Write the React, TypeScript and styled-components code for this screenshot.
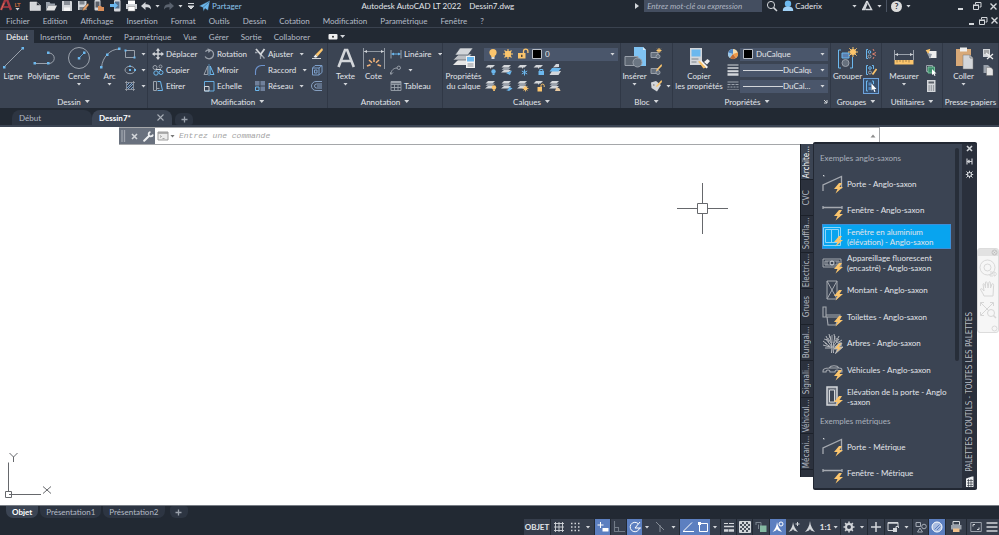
import React from 'react';
import styled, { createGlobalStyle, css } from 'styled-components';

const c = {
  dark: '#222933',
  panel: '#3b4453',
  field: '#4a566b',
  line: '#303846',
  text: '#e2e5ea',
  dim: '#b4bbc6',
  blue: '#5c7fc0',
};
const W = '#d3d6da';
const G = '#9aa1ab';
const B = '#6cb8ee';
const O = '#fbc56d';

const GlobalStyle = createGlobalStyle`
  * { box-sizing: border-box; }
  body { margin: 0; background: #fff; }
  body, button, input, select {
    font-family: Lato, "Open Sans", sans-serif;
    font-size: 8px;
    line-height: 10px;
    color: ${c.text};
  }
  button, input, select { border: 0; margin: 0; padding: 0; background: none; border-radius: 0; }
  ul { list-style: none; margin: 0; padding: 0; }
  svg { display: block; flex: none; }
  a { text-decoration: none; color: inherit; }
`;

/* ---------- icons ---------- */

const Layers = ({ y = 0 }: { y?: number }) => (
  <g transform={`translate(0 ${y})`}>
    <path d="M3 5h7l-2.500 2.500H0z" fill={W} />
    <path d="M3 2.500h7L7.500 5H.5z" fill={G} />
    <path d="M3 0h7L7.500 2.500H.5z" fill={W} />
  </g>
);
const OneLayer = () => <path d="M3 1h7L7.500 3.500H6.200L5 5V3.500H.5z" fill={W} />;
const Bolt = () => <path d="M17 10l-5 6h3.500l-2 4.500 7.500-6.500h-3.500l2.500-4z" fill={O} />;
const Pencil = () => <path d="M11.500 0L6.500 5.500 6 7l1.600-.5L12 2z" fill={O} />;

const icons: Record<string, [number, number, React.ReactNode]> = {
  appLogo: [12, 12, <g><path d="M1 10L5.200 0h2L11 10" fill="none" stroke="#a83a44" strokeWidth="2.400" /><path d="M3 7h6.500" stroke="#a83a44" strokeWidth="1.600" /><path d="M1 10L4 3" stroke="#d8705c" strokeWidth="1" /></g>],
  file: [12, 12, <path d="M1 2h6.500L11.500 5.500V10.500H1z M7.500 2v3.500h4" fill={W} stroke="#eee" strokeWidth=".5" />],
  open: [12, 12, <g><path d="M1 2h3.500l1 1.500H10v2H3.500L1 10z" fill={G} /><path d="M3.500 5.500H12L9.500 10.500H1z" fill="#e4e4e4" /></g>],
  save: [12, 12, <g><path d="M1 1h9.500l.5.5V11H1z" fill={W} /><path d="M3 1h6v4H3z" fill="#8a8f97" /><path d="M3 7.500h6V11H3z" fill="#f4f4f4" /></g>],
  saveAs: [12, 12, <g><path d="M1 1h8.500V10H1z" fill={W} /><path d="M2.500 1h5v3.500h-5zM2.500 7h5v3h-5z" fill="#7f858e" /><path d="M11 3L6 8.500 5.500 11 8 10l4-5z" fill="#e9a36b" stroke="#222" strokeWidth=".4" /></g>],
  openMobile: [12, 12, <g><rect x="1.500" y="0" width="6" height="10.500" rx="1" fill={W} /><path d="M2.500 1.500h4v6h-4z" fill="#5b6069" /><path d="M5 6h3l1 1h2v4H5z" fill="#d98e5a" /></g>],
  saveMobile: [12, 12, <g><rect x="5" y="0" width="6.500" height="11.500" rx="1" fill={W} /><path d="M6 1.500h4.500v7H6z" fill="#56708e" /><path d="M1 4h4V2l4 3.500L5 9V7H1z" fill={B} /></g>],
  print: [12, 12, <g><path d="M3 .5h7v4H3z" fill="#fff" /><path d="M1 4h11v5H1z" fill={W} /><path d="M3 6.500h7V11H3z" fill="#fff" stroke="#888" strokeWidth=".5" /></g>],
  undo: [10, 12, <path d="M0 6l4.500-4v2.300C8 4.300 10 5.500 10 9.500 8.500 7.500 7 7.300 4.500 7.300V10z" fill={W} />],
  redo: [10, 12, <path d="M10 6L5.500 2v2.300C2 4.300 0 5.500 0 9.500 1.500 7.500 3 7.300 5.500 7.300V10z" fill="#5a626e" />],
  customize: [8, 8, <path d="M1 1.500h6M1 4h6L4 7z" stroke={W} strokeWidth="1" fill={W} />],
  plane: [11, 12, <path d="M0 6L11 .5 9 10.500 6 8.500 4.500 11.500 3.800 7.500z M3.800 7.500L10 2" fill={B} stroke={c.dark} strokeWidth=".4" />],
  play: [6, 8, <path d="M1 1l4 3-4 3z" fill={W} />],
  search: [12, 12, <g fill="none" stroke={W}><circle cx="5" cy="5" r="3.600" /><path d="M7.600 7.600L11 11" strokeWidth="1.500" /></g>],
  user: [12, 12, <g><circle cx="6" cy="3.700" r="3.200" fill={B} /><path d="M.8 11c0-3.500 1.800-4.500 5.200-4.500s5.200 1 5.200 4.500z" fill="#9fd0f5" /></g>],
  appStore: [12, 12, <path d="M1 9.500h2.500L6 3.500M6 1l4.500 8.500H4.500M6 1L2 9" fill="none" stroke={W} strokeWidth="1.500" />],
  minimize: [8, 10, <path d="M1 8h5" stroke={W} strokeWidth="2" />],
  restore: [10, 10, <g fill="none" stroke={W}><path d="M3.500 3.500V1.500H9V6H7.500" /><path d="M1.500 4.500h5v4h-5z" /><path d="M1 4.200h6" strokeWidth="1.500" /></g>],
  close: [9, 9, <path d="M1.500 1.500l6 6M7.500 1.500l-6 6" stroke={W} strokeWidth="1.400" />],
  closeSmall: [9, 9, <path d="M2 2l5 5M7 2L2 7" stroke={W} strokeWidth="1.600" />],
  closeThin: [9, 9, <path d="M1.500 1.500l6 6M7.500 1.500l-6 6" stroke="#a7adb6" strokeWidth="1.100" />],
  navClose: [7, 7, <g fill="none" stroke="#b9b9b9" strokeWidth=".8"><circle cx="3.500" cy="3.500" r="2.500" /><path d="M2.500 2.500l2 2M4.500 2.500l-2 2" /></g>],
  navOptions: [7, 7, <circle cx="3.500" cy="3.500" r="2.500" fill="none" stroke="#d0d0d0" strokeWidth=".8" />],
  videoTab: [10, 8, <g><rect x=".5" y="1" width="9" height="5.500" rx="1" fill="#f0f0f0" /><circle cx="5" cy="3.800" r="1" fill="#333" /></g>],
  line: [24, 24, <g><path d="M3 21L22 2" stroke={G} /><path d="M2 20h2.500v2.500H2zM20.500 1H23v2.500h-2.500z" fill={B} /></g>],
  polyline: [24, 24, <g><path d="M2.500 17.500H17a5 5 0 000-10.500" fill="none" stroke={G} /><path d="M1.500 16H4v2.500H1.500zM15 16h2.500v2.500H15zM15 5.500h2.500V8H15z" fill={B} /></g>],
  circle: [24, 24, <g><circle cx="12" cy="12" r="10.500" fill="none" stroke={G} /><path d="M12 12l5-5" stroke={B} strokeWidth=".8" /><path d="M10.800 11h2.500v2.500h-2.500zM16 5.500h2.500V8H16z" fill={B} /></g>],
  arc: [24, 24, <g><path d="M3.500 21.500C4.500 11 12 3 21.500 3" fill="none" stroke={G} /><path d="M2 20h2.500v2.500H2zM8 7.500h2.500V10H8zM20 1.500h2.500V4H20z" fill={B} /></g>],
  rect: [12, 12, <g><path d="M1.500 2.500h9v7h-9z" fill="none" stroke={G} /><path d="M.5 1.500h2v2h-2zM9.500 8.500h2v2h-2z" fill={B} /></g>],
  ellipse: [12, 12, <g><ellipse cx="6" cy="6" rx="5" ry="3.700" fill="none" stroke={G} /><path d="M5 5h2v2H5zM10 5h2v2h-2zM5 1.500h2v1.500H5z" fill={B} /></g>],
  hatch: [12, 12, <g><path d="M1 2.500h10M1 9.500h10M2.500 1v10M9.500 1v10" stroke={G} strokeWidth=".8" /><path d="M3 5l2-2M3 8l5-5M4 9l5-5M7 9l2-2" stroke="#7ba4d0" strokeWidth="1" /></g>],
  move: [12, 12, <g fill={W}><path d="M6 0l2.200 2.700H3.800zM6 12l2.200-2.700H3.800zM0 6l2.700-2.200v4.400zM12 6L9.300 3.800v4.400z" /><path d="M5.300 2h1.400v8H5.300zM2 5.300h8v1.400H2z" /></g>],
  copy: [12, 12, <g fill="none"><circle cx="3" cy="3.500" r="2" stroke={G} /><circle cx="8.500" cy="2.500" r="1.500" stroke={G} /><circle cx="4" cy="9" r="2.200" stroke={B} /><circle cx="9" cy="8.500" r="2" stroke={B} /><path d="M4 5.500h5" stroke={W} /></g>],
  stretch: [12, 12, <g fill="none"><path d="M1.500 1.500h3v9h-3zM4.500 8.500h3" stroke={G} /><path d="M5.500 1.500h3l2 9h-5" stroke={B} /></g>],
  rotate: [12, 12, <g><path d="M8.500 2.500A4.500 4.500 0 1010.500 7" fill="none" stroke={G} strokeWidth="1.300" transform="matrix(-1 0 0 1 12 0) rotate(20 6 6)" /><path d="M4.500 .2l4 2-3 2.800z" fill={G} /></g>],
  mirror: [12, 12, <g fill="none"><path d="M4.800 2v8.500H1z" stroke={G} /><path d="M7.200 2v8.500H11z" stroke={B} /><path d="M6 0v12" stroke={B} strokeWidth=".6" /></g>],
  scale: [12, 12, <g fill="none"><path d="M1.500 1.500h9.500v9.500H1.500z" stroke={B} strokeWidth=".9" /><path d="M1.500 6.500h4.500V11H1.500z" stroke={W} /></g>],
  trim: [12, 12, <g><path d="M2 1l6 7" stroke={W} strokeWidth="1.800" /><path d="M10.500 1L6.500 6.500" stroke={W} strokeWidth="1.800" /><path d="M6.500 7v4M8 7.500l2.500 3M1 4.500h2.500" stroke={G} strokeWidth="1.300" /></g>],
  fillet: [12, 12, <path d="M1.500 11V7.500a6 6 0 016-6H11" fill="none" stroke="#6d93cc" strokeWidth="1.100" />],
  array: [12, 12, <g fill="#70809b"><path d="M1 1h4.500v4.500H1zM6.500 1H11v4.500H6.500zM6.500 6.500H11V11H6.500z" /><path d="M1.500 7h3.500v3.500H1.500z" fill="none" stroke={B} /></g>],
  erase: [12, 12, <g><path d="M11 0L4.500 6.500l2 2L12 2z" fill={O} /><path d="M4.500 6.500L2.500 9l2.500.8 1.500-1.300z" fill="#f3f3f3" /><path d="M1 10.500h9" stroke={W} /></g>],
  explode: [12, 12, <g fill="none" stroke="#7d9fcb"><path d="M1.500 4h6.500v7H1.500zM4 1.500h7v7L8 11M8 4l3-2.500M1.500 4L4 1.500" /><path d="M3.500 6h2.500v3H3.500z" /></g>],
  offset: [12, 12, <path d="M11 1.500H5a4.500 4.500 0 000 9h6M11 4H5.500a2 2 0 000 4H11M6 6h5" fill="none" stroke="#8ea9cd" strokeWidth=".9" />],
  text: [24, 24, <path d="M4.500 21L11 4h2.200l6.600 17M7 15h10" fill="none" stroke={W} strokeWidth="2.600" />],
  dimension: [24, 24, <g><path d="M1.500 2v21M22.500 2v21M2 5.500h20" stroke={G} strokeWidth=".9" /><path d="M2 5.500l3-1.500v3zM22 5.500L19 4v3z" fill={W} /><path d="M5 20l3.500-1.200M7 14l3 2.800M12 12v4M17 14l-3 2.800M19 20l-3.500-1.200" stroke="#f0b27a" strokeWidth="1.500" /></g>],
  linear: [12, 12, <g><path d="M1 2v8.500M11 2v8.500" stroke={G} /><path d="M1.500 6h9" stroke={B} /><path d="M1.500 6L4 4.500v3zM10.500 6L8 4.500v3z" fill={B} /></g>],
  leader: [12, 12, <g fill="none" stroke={G}><path d="M1 10c0-4 3-6 6-6" /><circle cx="8.800" cy="3.800" r="1.700" /><path d="M0 8l1 2.500L3 8.500" /></g>],
  table: [12, 12, <g><path d="M1 1.500h10v9H1zM1 4.500h10M1 7.500h10M4.500 4v6.500M8 4v6.500" fill="none" stroke={G} strokeWidth=".9" /><path d="M1 1h10v2.500H1z" fill={G} /></g>],
  layerProps: [24, 24, <g><path d="M7 13h13l-5 6H1z" fill="#e6e6e6" /><path d="M7 8h13l-5 6H1z" fill="#bcbfc4" stroke={c.panel} strokeWidth=".6" /><path d="M8 2h13l-5 7H3z" fill={W} stroke={c.panel} strokeWidth=".6" /><path d="M14 10h9v12h-9z" fill="#f2f2f2" /><path d="M15 11h7v4.500h-7z" fill={B} /><path d="M15.500 18h6M15.500 20h6" stroke="#8b8f96" /></g>],
  bulb: [12, 12, <g><circle cx="6" cy="4.500" r="3.600" fill={O} /><path d="M4.200 7h3.600v2H4.200z" fill={O} /><path d="M4.500 9h3v2h-3z" fill="#ddd" /></g>],
  sun: [12, 12, <g><circle cx="6" cy="6" r="3.200" fill={O} /><path d="M6 1v10M1 6h10M2.500 2.500l7 7M9.500 2.500l-7 7" stroke={O} strokeWidth="1.100" /></g>],
  unlock: [12, 12, <g><path d="M1 5h7.500v5.500H1z" fill={O} /><path d="M6.500 5V3.300a2.200 2.200 0 014.400 0V5" fill="none" stroke={O} strokeWidth="1.300" /><path d="M4 6.800h1.500V9H4z" fill="#53483a" /></g>],
  swatch: [10, 10, <path d="M.5.5h9v9h-9z" fill="#000" stroke="#b9bec6" />],
  l1: [12, 12, <g><OneLayer /><circle cx="8.500" cy="7.500" r="2.200" fill={B} /><path d="M7.500 9.500h2V11h-2z" fill={B} /></g>],
  l2: [12, 12, <g><Layers y={1} /><path d="M5 9l6-2.500L9 11z" fill={B} /></g>],
  l3: [12, 12, <g><OneLayer /><path d="M7.500 5.500v6M4.800 7l5.400 3M10.200 7L4.800 10" stroke={B} /></g>],
  l4: [12, 12, <g><OneLayer /><path d="M5.500 7h5.500v4H5.500z" fill={B} /><path d="M6.800 7V5.500h3V7" fill="none" stroke={B} /></g>],
  l5: [12, 12, <g><path d="M3 7h9l-2.500 4H.5z" fill={W} /><path d="M3 4h9l-2.500 3.500H.5z" fill={B} /><path d="M4 3.500L7 0h3v3z" fill={W} /></g>],
  l6: [12, 12, <g><Layers y={1} /><circle cx="9" cy="7.500" r="2.200" fill={O} /><path d="M8.200 9.500h1.700V11H8.200z" fill={O} /></g>],
  l7: [12, 12, <g><Layers y={1} /><path d="M5 10c2 0 3-1 3-3.500L11.500 8.500 8 11z" fill={B} /></g>],
  l8: [12, 12, <g><Layers y={1} /><circle cx="8.500" cy="8.500" r="2" fill={O} /><path d="M8.500 5.500v6M5.500 8.500h6M6.500 6.500l4 4M10.500 6.500l-4 4" stroke={O} strokeWidth=".8" /></g>],
  l9: [12, 12, <g><OneLayer /><path d="M4.500 7H9v4.500H4.500z" fill={O} /><path d="M8 7V5.700a1.600 1.600 0 013.200 0V7" fill="none" stroke={O} /></g>],
  l10: [12, 12, <g><Layers y={1} /><path d="M6 11l1.500-4 3 1.500 1 2.500z" fill="#e8c9a0" /></g>],
  insert: [24, 24, <g><path d="M11 1h9l3 3v16H11z" fill="#7fc3f3" /><path d="M20 1v3h3z" fill="#d6ecfb" /><path d="M2 10.500h13v9H2z" fill="#5b6470" stroke={G} /><circle cx="14.500" cy="16.500" r="4.500" fill="#6b7683" stroke={G} /></g>],
  blockNew: [12, 12, <g><path d="M1 4.500h7v5H1z" fill="#66707d" stroke={G} /><circle cx="8" cy="8.500" r="2" fill="#66707d" stroke={G} /><path d="M9 0v5M6.500 2.500h5M7.300.8l3.400 3.400M10.700.8L7.300 4.200" stroke={O} /></g>],
  blockEdit: [12, 12, <g><path d="M1 4.500h7v5H1z" fill="#66707d" stroke={G} /><circle cx="8" cy="8.500" r="2" fill="#66707d" stroke={G} /><Pencil /></g>],
  blockAttr: [12, 12, <g><path d="M1 2.500l5-1.500 5 4-4 6.500L1.500 8z" fill={W} /><path d="M3 5h1.500" stroke="#666" /><Pencil /></g>],
  matchProps: [24, 24, <g><path d="M3 2h12v17H3z" fill={W} /><path d="M4.500 3.500h9v7h-9z" fill={B} /><path d="M4.500 13h7M4.500 16h5" stroke="#7c828a" strokeWidth="1.200" /><path d="M17 16l3.500-3 2.500 2-3 3.500z" fill="#eee" /><path d="M14 14l7 7-1.500 1.500-7-6z" fill="#f4f4f4" /><path d="M11 15.500l2-.5 6 6.500-2.500 1z" fill={O} /></g>],
  colorWheel: [12, 12, <g><circle cx="6" cy="6" r="5" fill="#f3ddb0" /><path d="M6 6V1a5 5 0 00-4.800 4z" fill="#4e86c8" /><path d="M6 6L1.200 4.500A5 5 0 003 10z" fill="#9ac8ea" /><path d="M6 6l-3 4a5 5 0 006 0z" fill="#c06b35" /><path d="M6 6l3 4a5 5 0 001.800-5.500z" fill="#ef9a48" /></g>],
  weights: [12, 12, <g stroke={W}><path d="M.5 1h11" strokeWidth="1" /><path d="M.5 4h11" strokeWidth="1.500" /><path d="M.5 7.200h11" strokeWidth="2" /><path d="M.5 10.500h11" strokeWidth="2.500" /></g>],
  linetypes: [12, 12, <g stroke={G}><path d="M.5 2h11" /><path d="M.5 4.500h11" strokeDasharray="3 1" /><path d="M.5 7h11" strokeDasharray="2 1" /><path d="M.5 9.500h11" strokeDasharray="1 1" /></g>],
  group: [24, 24, <g><path d="M5 4H2.500v18H5M14 22h2.500V11" fill="none" stroke={B} /><path d="M6 7h7v5H6z" fill="#5b7fae" stroke={B} /><circle cx="9.500" cy="17" r="3.500" fill="#66707d" stroke={G} /><circle cx="17" cy="6" r="3" fill={O} /><path d="M17 1v10M12 6h10M13.300 2.300l7.400 7.400M20.700 2.300l-7.400 7.400" stroke={O} /></g>],
  ungroup: [12, 12, <g fill="none"><path d="M3 1.500H1.500v9H3" stroke={B} /><circle cx="4.500" cy="4" r="1.300" stroke={B} /><circle cx="4.500" cy="8.500" r="1.500" stroke={G} /><path d="M8 1l1 2M8 11l1-2M7.500 6L11 4.500M11 7.500L7.500 6" stroke="#d9806e" /></g>],
  groupEdit: [12, 12, <g fill="none"><path d="M3 1.500H1.500v9H3M7 1.500h1.500V5" stroke={B} /><circle cx="5" cy="4" r="1.300" stroke={B} /><circle cx="5" cy="8.500" r="1.500" stroke={G} /><path d="M11.500 5l-4 5.500" stroke={O} strokeWidth="1.800" /></g>],
  groupSel: [12, 12, <g><path d="M3 1H1.500v10H3M7 1h1.500v3" fill="none" stroke={B} /><path d="M3.500 2.500h3v3h-3zM3.500 7h2.500v3H3.500z" fill="#5286bd" /><path d="M6.500 3.500v7l1.700-1.400L9.300 12l1.200-.6L9.400 9h2.100z" fill="#fff" /></g>],
  measure: [24, 24, <g><path d="M2.500 4v10M21.500 4v10M3 8.500h18" stroke={G} /><path d="M3 8.500L6 7v3zM21 8.500L18 7v3z" fill={W} /><path d="M2.500 14h19v4.500h-19z" fill={O} /><path d="M5 14v2.500M8 14v2M11 14v2.500M14 14v2M17 14v2.500" stroke="#876a3b" strokeWidth=".7" /></g>],
  quickSel: [12, 12, <g><path d="M4 3h7.500v7H4z" fill="#eee" /><path d="M.5 3l4-3v6z" fill={O} transform="rotate(20 3 3)" /><path d="M2 5l5 1-2 5z" fill={G} /></g>],
  selectAll: [12, 12, <g><path d="M1.500 1.500h6v6h-6z" fill="none" stroke={G} /><path d="M3 3h6.500v6H3z" fill="#3f8b6c" stroke="#78c29c" /><path d="M7 5v6l1.500-1 1 2 1-.5-1-2h2z" fill="#fff" /></g>],
  calc: [12, 12, <g><path d="M2 0h8.500v12H2z" fill={W} /><path d="M3.500 1.500h5.500v2H3.500z" fill="#5c626b" /><path d="M3.500 6h6M3.500 8h6M3.500 10h6" stroke="#5c626b" strokeDasharray="1.200 1" /></g>],
  paste: [24, 24, <g><path d="M4 3h15v17H4z" fill="#d8a978" /><path d="M8 1.500h7v4H8z" fill="#eee" /><path d="M11 9h7l3 3v11H11z" fill={W} stroke="#777" strokeWidth=".5" /><path d="M18 9v3h3" fill="none" stroke="#888" /></g>],
  cut: [12, 12, <g><path d="M1 1h7v8H1z" fill={W} /><path d="M2 3h5M2 5h5" stroke="#777" /><path d="M4 5l7 6M11 6l-6 5" stroke="#eee" strokeWidth="1.300" /></g>],
  copyClip: [12, 12, <g><path d="M1.500 1H6l2 2v6H1.500z" fill={G} /><path d="M4.500 3.500H9l2 2v6H4.500z" fill="#e4e4e4" stroke="#666" strokeWidth=".4" /></g>],
  dialog: [5, 5, <path d="M1 1l3 3M4 1v3H1" stroke={W} strokeWidth="1" fill="none" />],
  wrench: [11, 11, <g fill="none" stroke="#eef0f2"><path d="M1.200 9.800L6 5" strokeWidth="2" strokeLinecap="round" /><path d="M10 3.500A2.200 2.200 0 117.500 1" strokeWidth="1.700" /></g>],
  grip: [5, 12, <path d="M1 .5v11M3.500 .5v11" stroke={W} strokeWidth="1.300" strokeDasharray="1 1" />],
  prompt: [12, 10, <g><path d="M1 1h10v8H1z" fill="#ececec" stroke="#9b9b9b" /><path d="M1 2h10" stroke="#9b9b9b" strokeWidth="1.500" /><path d="M3 4.500l1.500 1L3 6.500M5.500 7.500h2" stroke="#888" fill="none" strokeWidth=".7" /></g>],
  up: [6, 6, <path d="M.5 4.500L3 1.500l2.500 3z" fill="#8d8d8d" />],
  plus: [9, 9, <path d="M4.500 1.500v6M1.500 4.500h6" stroke={G} strokeWidth="1.300" />],
  collapse: [9, 9, <path d="M2 1.500v6M7 1.500v6M2 4.500h2.500M4.500 3l-1.500 1.500L4.500 6M7 4.500H4.500" stroke={W} strokeWidth="1.100" fill="none" />],
  gear: [12, 12, <g><circle cx="6" cy="6" r="3" fill="none" stroke={W} strokeWidth="2" /><path d="M6 .5v2M6 9.500v2M.5 6h2M9.500 6h2M2.100 2.100l1.400 1.400M8.500 8.500l1.400 1.400M9.900 2.100L8.500 3.500M3.500 8.500L2.100 9.900" stroke={W} strokeWidth="1.500" /></g>],
  gearSmall: [9, 9, <g><circle cx="4.500" cy="4.500" r="2" fill="none" stroke={W} strokeWidth="1.200" /><path d="M4.500 .8v1.700M4.500 6.500v1.700M.8 4.500h1.700M6.500 4.500h1.700M1.500 1.500l1.500 1.500M6 6l1.500 1.500M7.500 1.500L6 3M3 6L1.500 7.500" stroke={W} /></g>],
  sheet: [9, 12, <g><path d="M1 2.500L7 .5h1.500V11H1z" fill="#eceef0" /><path d="M2 4.500h6M2 7h6M2 9.500h6M3.500 3v8M6 3v8" stroke={c.dark} strokeWidth=".6" /></g>],
  door: [22, 21, <g><path d="M1 18v-6L19.500 3.500v12" fill="none" stroke="#a5a9b0" strokeWidth="1.300" /><path d="M1 2.500h1v1" stroke={W} fill="none" /><Bolt /></g>],
  window: [22, 21, <g><path d="M1 6v3M20 6v3M1 7.500h19" stroke="#a5a9b0" strokeWidth="1.300" /><Bolt /></g>],
  aluWindow: [22, 21, <g><path d="M1.500 1.500h17v18h-17z M3.500 3.500h13v13h-13z M9.500 3.500v13" fill="none" stroke="#8fd5f9" /><Bolt /></g>],
  light: [22, 21, <g><path d="M1 6h18v8H1zM3 8h14v4H3z" fill="none" stroke="#a5a9b0" /><circle cx="10" cy="10" r="2" fill="none" stroke={W} /><path d="M5 8v4M15 8v4" stroke="#a5a9b0" /><Bolt /></g>],
  stud: [22, 21, <g><path d="M5 1h10v18H5zM5 1l10 18M15 1L5 19" fill="none" stroke="#a5a9b0" /><Bolt /></g>],
  toilet: [22, 21, <g><path d="M1 1v10h3V1zM4 9h14v2H1M5 11l1 8h8l1-4M18 11c0 2-1 4-3 5" fill="none" stroke="#a5a9b0" strokeWidth="1.100" /><Bolt /></g>],
  tree: [22, 21, <g fill="none" stroke="#b5b8bd"><path d="M9.500 20l.5-6M11.500 20L11 14M10 15L3 10M10 14L4 6M10 14L8 3M11 14l2-11M11 14l6-8M11 15l8-5M1 8l4 3M1 12l7 2M4 3l3 6M7 1l1 4M12 1l1 5M17 3l-3 6M20 7l-5 3M20 12l-7 2M3 15l6 0" /><path d="M2 6l3 1M10 2v8M6 5l3 5M15 5l-3 5" strokeWidth=".8" /><Bolt /></g>],
  car: [22, 21, <g><path d="M1 11c0-3 3-3 6-3 2-3 8-3 10 0 3 0 3 1 3 4h-3a2 2 0 00-4 0H8a2 2 0 00-4 0H1zM7 8h10" fill="none" stroke="#a5a9b0" strokeWidth="1.100" /><Bolt /></g>],
  doorElev: [22, 21, <g><path d="M5 1h10v18H5z" fill="#6c737e" stroke={W} strokeWidth="1.500" /><path d="M7.500 4h5v12h-5z" fill={c.panel} stroke={W} /><Bolt /></g>],
  sGrid: [12, 12, <path d="M1 2.500h10M1 6h10M1 9.500h10M2.500 1v10M6 1v10M9.500 1v10" stroke={W} strokeWidth=".9" />],
  sDots: [12, 12, <path d="M2 2.500h9M2 6h9M2 9.500h9" stroke={W} strokeWidth="1.500" strokeDasharray="1.500 2" />],
  sDyn: [12, 12, <g><path d="M3.500 1v6M.5 4h6" stroke="#fff" /><path d="M5.500 7h6v3.500h-6z" fill="#fff" /></g>],
  sOrtho: [12, 12, <path d="M1.500 0v10.500H12M1.500 6.500h4v4" fill="none" stroke="#737c88" strokeWidth="1.100" />],
  sPolar: [12, 12, <g fill="none" stroke="#fff"><path d="M9 2.500A4.700 4.700 0 1010.500 7" /><path d="M6 7h6M6 7l5-6" /></g>],
  sIso: [12, 12, <path d="M2 1l8 8M6 4v7" stroke="#858c96" fill="none" />],
  sTrack: [12, 12, <path d="M1 10.500h11M1.500 10L10 1.500" stroke="#fff" fill="none" />],
  sSnap: [12, 12, <g><path d="M2.500 2.500h8v8h-8z" fill="none" stroke="#fff" /><path d="M1 1h3v3H1z" fill="#fff" /></g>],
  sWeight: [12, 12, <g stroke={W}><path d="M1 2.500h4M6 2.500h5" /><path d="M1 5.500h10" strokeWidth="1.500" /><path d="M1 9.500h4M5.500 9.500H11" strokeWidth="2.500" /></g>],
  sTransp: [12, 12, <g><path d="M.5 .5h11v11H.5z" fill="#4a515c" stroke={W} /><path d="M1 2h10M1 6h10M1 10h10" stroke={W} strokeWidth="2" strokeDasharray="2 2" /><path d="M3 4h8M3 8h8" stroke={W} strokeWidth="2" strokeDasharray="2 2" /></g>],
  sCycle: [12, 12, <g><path d="M1 1.500h5v5M1 1v3M3.500 3.500V8" fill="none" stroke="#7b848f" /><path d="M5 4.500h6.500V11H5z" fill="#85b9a2" /></g>],
  sAnno: [12, 12, <path d="M6 0C5.500 5 3.500 8 1 11l4-1.500L6 8l1 1.500 4 1.500C8.500 8 6.500 5 6 0z" fill={W} />],
  sAnnoOn: [12, 12, <g><path d="M5 1C4.500 6 3 8 .5 11l3.500-1.500 1-1.500 1 1.500L10 11C7.500 8 5.500 5 5 1z" fill="#fff" /><circle cx="9" cy="3" r="2" fill="none" stroke="#fff" /></g>],
  sAnnoAdd: [12, 12, <g><path d="M5 1C4.500 6 3 8 .5 11l3.500-1.500 1-1.500 1 1.500L10 11C7.500 8 5.500 5 5 1z" fill={W} /><path d="M9.500 1v4M7.500 3h4" stroke={W} /></g>],
  sPlus: [12, 12, <path d="M6 1v10M1 6h10" stroke={W} strokeWidth="1.500" />],
  sLockUi: [12, 12, <g><path d="M6 9.500H1v-8h10v4" fill="none" stroke={W} /><path d="M1 2h10" stroke={W} strokeWidth="1.500" /><path d="M6 7h4v4H6z" fill={W} /><path d="M9 7V5.500h2.500V7" fill="none" stroke={W} /></g>],
  sIsolate: [12, 12, <g fill="none" stroke="#a4abb5"><path d="M1 1.500h4.500v4H1z" /><circle cx="9" cy="5.500" r="2.300" /><path d="M2.500 11L5 7l2.500 4z" /></g>],
  sHw: [12, 12, <g><circle cx="6" cy="6" r="5" fill="#a9bce0" stroke="#fff" /><path d="M3.500 8.500l5-5M6 9l3.500-3.500" stroke="#5c7fc0" /></g>],
  sPrint: [12, 12, <g><path d="M3 .5h6.500V4H3z" fill="none" stroke={W} /><path d="M1 4h10.500v4.500H1z" fill={G} /><path d="M3 7.500h6.500v3.500H3z" fill="#efc08c" /></g>],
  sClean: [12, 12, <g fill="none" stroke={G}><path d="M.8 1.500h10.500v9H.8z" /><path d="M3 5.500v-2h2M9 6.500v2H7" stroke={W} /></g>],
  sMenu: [12, 12, <path d="M.5 2h11M.5 6h11M.5 10h11" stroke={W} strokeWidth="1.300" />],
  navWheel: [18, 18, <g fill="none" stroke="#d9d9d9"><circle cx="8.500" cy="8.500" r="7.500" /><circle cx="8.500" cy="8.500" r="3.500" /><path d="M11 13h2.500v2H11v2h3M15 13v4c3 0 3-4 0-4" /></g>],
  navHand: [18, 18, <path d="M5 16C4 13 2 11 1.500 9c1-1 2 0 3.500 2L4 4c1-1 2 0 2.500 4l0-6c1-1 2 0 2.500 6l1-6c1-1 2 0 1.500 6l1.500-4c1-1 2 0 1.500 3L14 16z" fill="none" stroke="#d6d6d6" />],
  navZoom: [18, 18, <g fill="none" stroke="#d6d6d6"><path d="M1.500 1.500l13 13M14 2L2 14M1.500 5V1.500H5M11 1.500h3.500V5M1.500 11v3.500H5" /><circle cx="12" cy="12" r="3.500" fill="#f6f6f6" /><path d="M14.500 14.500L17 17" strokeWidth="1.500" /></g>],
};

const Icon = ({ name }: { name: string }) => {
  const [w, h, node] = icons[name];
  return <svg width={w} height={h} viewBox={`0 0 ${w} ${h}`} aria-hidden="true">{node}</svg>;
};

const Caret = styled.span`
  flex: none;
  width: 5px;
  height: 3px;
  background: ${W};
  clip-path: polygon(0 0, 100% 0, 50% 100%);
`;

/* ---------- shell ---------- */

const Shell = styled.div`
  display: flex;
  flex-direction: column;
  min-height: 100vh;
  background: ${c.dark};
  white-space: nowrap;
  overflow: hidden;
`;
const TitleBar = styled.header`
  display: flex;
  justify-content: space-between;
  height: 12px;
  align-items: center;
`;
const QuickTools = styled.div`
  display: flex;
  align-items: center;
  gap: 4px;
`;
const IconButton = styled.button<{ $pad?: number }>`
  display: flex;
  align-items: center;
  justify-content: center;
  flex: none;
  padding: 0 ${p => p.$pad ?? 0}px;
`;
const Brand = styled.button`
  display: flex;
  align-items: center;
  gap: 1px;
  margin-right: 3px;
`;
const BrandTag = styled.span`
  display: flex;
  flex-direction: column;
  align-items: center;
  width: 9px;
  font-size: 6px;
  font-weight: 700;
  line-height: 6px;
  color: #c06a3a;
`;
const Share = styled.button`
  display: flex;
  align-items: center;
  gap: 2px;
  color: #8cc4ee;
`;
const WindowTitle = styled.h1`
  margin: 0;
  font-size: 8px;
  font-weight: 400;
  white-space: pre;
`;
const Account = styled.div`
  display: flex;
  align-items: center;
  justify-content: flex-end;
  gap: 4px;
  padding-right: 1px;
`;
const SearchInput = styled.input`
  width: 118px;
  height: 12px;
  padding-left: 3px;
  background: #444e60;
  font-style: italic;
  &::placeholder { color: #aeb5c0; opacity: 1; }
`;
const UserButton = styled.button`
  display: flex;
  align-items: center;
  gap: 1px;
  margin-right: 26px;
`;
const HelpDot = styled.button`
  width: 11px;
  height: 11px;
  border-radius: 50%;
  background: #dcdcdc;
  color: ${c.dark};
  font-weight: 700;
`;
const Rule = styled.span`
  width: 1px;
  height: 12px;
  background: #4a5362;
`;
const WindowButtons = styled.div<{ $gap: number }>`
  display: flex;
  align-items: center;
  gap: ${p => p.$gap}px;
  margin-left: ${p => (p.$gap > 5 ? '42px' : 'auto')};
`;
const MenuBar = styled.nav`
  display: flex;
  align-items: center;
  height: 16px;
  padding: 2px 0 0 6px;
  gap: 13px;
  border-bottom: 1px solid #3a424f;
  color: ${c.dim};
`;
const RibbonTabs = styled.div`
  display: flex;
  align-items: stretch;
  height: 15px;
  padding-top: 2px;
`;
const RibbonTab = styled.button<{ $on?: boolean }>`
  padding: 0 6px;
  color: ${p => (p.$on ? '#fff' : c.dim)};
  background: ${p => (p.$on ? c.panel : 'transparent')};
`;
const TabExtra = styled.button`
  display: flex;
  align-items: center;
  gap: 2px;
  margin-left: 12px;
`;

/* ---------- ribbon ---------- */

const Ribbon = styled.section`
  display: flex;
  height: 65px;
  background: ${c.panel};
`;
const Panel = styled.section<{ $w: number }>`
  display: flex;
  flex-direction: column;
  flex: ${p => p.$w} 1 ${p => p.$w}px;
  min-width: 0;
  padding-top: 3px;
  border-right: 1px solid ${c.line};
  overflow: hidden;
`;
const PanelBody = styled.div`
  display: flex;
  height: 49px;
`;
const PanelFoot = styled.div`
  display: flex;
  height: 13px;
`;
const PanelLabel = styled.button`
  display: flex;
  flex: 1;
  align-items: center;
  justify-content: center;
  gap: 4px;
`;
const BigButton = styled.button<{ $w: number }>`
  display: flex;
  flex-direction: column;
  align-items: center;
  flex: none;
  width: ${p => p.$w}px;
`;
const BigLabel = styled.span`
  margin-top: 1px;
  text-align: center;
  white-space: pre;
`;
const DownSpace = styled.span`
  display: flex;
  align-items: center;
  height: 6px;
`;
const Column = styled.div<{ $w: number }>`
  display: grid;
  grid-template-rows: repeat(3, 16px);
  flex: none;
  width: ${p => p.$w}px;
`;
const SmallButton = styled.button<{ $on?: boolean; $gap?: number }>`
  display: flex;
  align-items: center;
  gap: ${p => p.$gap ?? 3}px;
  padding: 0 2px;
  ${p => p.$on && css`
    justify-self: start;
    border: 1px solid #6ea3dc;
    padding: 0 1px;
    background: #38506f;
  `}
  ${Caret} { margin-left: 4px; }
`;
const FieldColumn = styled.div`
  display: grid;
  grid-template-rows: repeat(3, 16px);
  flex: 1;
  align-items: center;
  min-width: 0;
  padding-right: 2px;
`;
const Field = styled.label`
  display: flex;
  align-items: center;
  height: 13px;
  gap: 3px;
  padding: 0 3px;
  background: ${c.field};
`;
const Picker = styled.select<{ $w?: number }>`
  appearance: none;
  ${p => (p.$w ? `flex: none; width: ${p.$w}px;` : 'flex: 1; min-width: 0;')}
  outline: 0;
  overflow: hidden;
`;
const Stroke = styled.span`
  flex: 1;
  height: 1px;
  margin-right: -3px;
  background: ${W};
`;
const IconRow = styled.div`
  display: flex;
  align-items: center;
  gap: 4px;
  padding-left: 1px;
`;
const Spacer = styled.span<{ $w: number }>`flex: 0 1 ${p => p.$w}px;`;

const Big = ({ icon, label, w, down }: { icon: string; label: string; w: number; down?: boolean }) => (
  <BigButton $w={w}>
    <Icon name={icon} />
    <BigLabel>{label}</BigLabel>
    {down && <DownSpace><Caret /></DownSpace>}
  </BigButton>
);
type Cmd = { icon: string; label?: string; down?: boolean; on?: boolean };
const Commands = ({ w, items, gap }: { w: number; items: Cmd[]; gap?: number }) => (
  <Column $w={w}>
    {items.map(i => (
      <SmallButton key={i.icon} aria-label={i.label ?? i.icon} $on={i.on} $gap={gap}>
        <Icon name={i.icon} />
        {i.label && <span>{i.label}</span>}
        {i.down && <Caret />}
      </SmallButton>
    ))}
  </Column>
);
const RibbonPanel = ({ w, title, children, plain, launcher }: {
  w: number; title: string; children: React.ReactNode; plain?: boolean; launcher?: boolean;
}) => (
  <Panel $w={w}>
    <PanelBody>{children}</PanelBody>
    <PanelFoot>
      <PanelLabel>{title}{!plain && <Caret />}</PanelLabel>
      {launcher && <IconButton $pad={2} aria-label={title}><Icon name="dialog" /></IconButton>}
    </PanelFoot>
  </Panel>
);

/* ---------- file tabs and drawing area ---------- */

const FileTabs = styled.div`
  display: flex;
  align-items: flex-end;
  height: 19px;
  padding-left: 12px;
  border-bottom: 2px solid ${c.panel};
`;
const FileTab = styled.div<{ $on?: boolean }>`
  display: flex;
  align-items: center;
  width: 80px;
  height: 15px;
  padding: 0 7px;
  border-radius: 8px 8px 0 0;
  background: ${p => (p.$on ? c.panel : '#2d3542')};
  button:first-child {
    flex: 1;
    text-align: left;
    color: ${p => (p.$on ? '#fff' : c.dim)};
    font-weight: ${p => (p.$on ? 700 : 400)};
  }
`;
const AddTab = styled.button<{ $flip?: boolean }>`
  display: grid;
  place-items: center;
  width: 18px;
  height: 12px;
  margin-left: 3px;
  border-radius: ${p => (p.$flip ? '3px 3px 6px 6px' : '6px 6px 3px 3px')};
  background: #2d3542;
`;
const Canvas = styled.main`
  position: relative;
  flex: 1;
  min-height: 378px;
  background: #fff;
`;
const CommandLine = styled.form`
  position: absolute;
  top: 0;
  left: 119px;
  right: 119px;
  display: flex;
  height: 18px;
  border: 1px solid #a5a7aa;
  border-left: 0;
  background: #fff;
`;
const CommandGrip = styled.div`
  display: flex;
  align-items: center;
  gap: 4px;
  width: 36px;
  padding-left: 2px;
  background: #69717e;
`;
const CommandField = styled.label`
  display: flex;
  flex: 1;
  align-items: center;
  gap: 1px;
  padding: 0 3px 0 2px;
  ${Caret} { background: #777; margin-right: 3px; }
`;
const CommandInput = styled.input`
  flex: 1;
  outline: 0;
  color: #333;
  font-family: "Liberation Mono", monospace;
  font-style: italic;
  &::placeholder { color: #a3a3a3; opacity: 1; }
`;
const Crosshair = styled.div`
  position: absolute;
  left: 677px;
  top: 56px;
`;
const Axes = styled.div`
  position: absolute;
  left: 4px;
  bottom: 4px;
`;
const NavBar = styled.div`
  position: absolute;
  right: 0;
  top: 121px;
  display: flex;
  flex-direction: column;
  align-items: center;
  gap: 3px;
  width: 22px;
  height: 85px;
  border: 1px solid #dcdcdc;
  border-radius: 3px;
  background: #f6f6f6;
`;
const NavHead = styled.div<{ $foot?: boolean }>`
  display: flex;
  justify-content: flex-end;
  align-items: center;
  width: 100%;
  height: 7px;
  margin-top: ${p => (p.$foot ? 'auto' : 0)};
  background: ${p => (p.$foot ? 'none' : '#e2e2e2')};
`;

/* ---------- tool palette ---------- */

const Palette = styled.aside`
  position: absolute;
  top: 15px;
  right: 22px;
  display: flex;
  height: 348px;
`;
const SideTabs = styled.div`
  display: flex;
  flex-direction: column;
  width: 13px;
  height: 333px;
  margin-top: 2px;
  padding-bottom: 7px;
  border-left: 1px solid #171c24;
  background: #2b313d;
`;
const SideTab = styled.button<{ $on?: boolean }>`
  flex: 1;
  border-bottom: 1px solid #1c212a;
  background: ${p => (p.$on ? c.panel : '#2b313d')};
  color: ${p => (p.$on ? '#fff' : '#b4bac4')};
  font-family: "DejaVu Sans Condensed", sans-serif;
  writing-mode: vertical-rl;
  line-height: 12px;
  span { display: block; transform: rotate(180deg); }
`;
const PaletteBox = styled.div`
  display: flex;
  width: 164px;
  border: solid #222833;
  border-width: 2px 0 2px 1px;
  border-radius: 2px;
  background: ${c.panel};
`;
const PaletteBody = styled.div`
  flex: 1;
  min-width: 0;
  padding: 4px 2px 0 6px;
  overflow: hidden;
`;
const GroupTitle = styled.h2`
  margin: 0;
  height: 23px;
  line-height: 21px;
  font-size: 8px;
  font-weight: 400;
  color: #aab1bc;
`;
const ToolList = styled.ul<{ $h: number }>`
  display: grid;
  grid-auto-rows: 1fr;
  height: ${p => p.$h}px;
`;
const ToolItem = styled.button<{ $on?: boolean }>`
  display: flex;
  align-items: center;
  gap: 3px;
  width: 129px;
  height: 25px;
  margin-left: 2px;
  text-align: left;
  white-space: pre;
  background: ${p => (p.$on ? '#08a4ef' : 'transparent')};
  box-shadow: ${p => (p.$on ? 'inset 0 0 0 1px #3d8fd8' : 'none')};
`;
const ScrollTrack = styled.div`
  width: 4px;
  height: 213px;
  margin: 4px 3px 0 0;
  border-radius: 2px;
  background: #272e39;
`;
const PaletteEdge = styled.div`
  display: flex;
  flex-direction: column;
  align-items: center;
  gap: 4px;
  width: 15px;
  background: #2a303c;
`;
const PaletteTitle = styled.span`
  margin: auto 0 0;
  writing-mode: vertical-rl;
  transform: rotate(180deg);
  font-family: "DejaVu Sans Condensed", sans-serif;
  color: #b4bac4;
`;

/* ---------- bottom bars ---------- */

const LayoutTabs = styled.div`
  display: flex;
  height: 13px;
  gap: 2px;
  padding-left: 6px;
  border-top: 1px solid #777d85;
`;
const LayoutTab = styled.button<{ $on?: boolean }>`
  height: 12px;
  padding: 0 6px;
  border-radius: 0 0 7px 7px;
  background: ${p => (p.$on ? c.panel : '#2d3542')};
  color: ${p => (p.$on ? '#fff' : c.dim)};
  font-weight: ${p => (p.$on ? 700 : 400)};
`;
const StatusBar = styled.footer`
  display: flex;
  justify-content: flex-end;
  height: 17px;
  padding-top: 1px;
`;
const StatusButton = styled.button<{ $w: number; $on?: boolean; $edge?: boolean }>`
  display: flex;
  align-items: center;
  justify-content: center;
  gap: 2px;
  width: ${p => p.$w}px;
  flex: none;
  border-right: ${p => (p.$edge ? 1 : 0)}px solid ${c.dark};
  background: ${p => (p.$on ? c.blue : '#363e4c')};
  font-weight: 700;
`;

type Status = { w: number; icon?: string; label?: string; on?: boolean; edge?: boolean; down?: boolean };
const status: Status[] = [
  { w: 27, label: 'OBJET', edge: true },
  { w: 16, icon: 'sGrid' }, { w: 15, icon: 'sDots' }, { w: 13, down: true, edge: true },
  { w: 16, icon: 'sDyn', on: true, edge: true }, { w: 16, icon: 'sOrtho', edge: true },
  { w: 15, icon: 'sPolar', on: true }, { w: 10, down: true },
  { w: 16, icon: 'sIso' }, { w: 12, down: true, edge: true },
  { w: 15, icon: 'sTrack', on: true }, { w: 15, icon: 'sSnap', on: true }, { w: 11, down: true, edge: true },
  { w: 16, icon: 'sWeight', edge: true }, { w: 16, icon: 'sTransp', edge: true }, { w: 17, icon: 'sCycle', edge: true },
  { w: 16, icon: 'sAnnoOn', on: true }, { w: 16, icon: 'sAnnoAdd' }, { w: 16, icon: 'sAnno' },
  { w: 23, label: '1:1', down: true, edge: true },
  { w: 16, icon: 'gear' }, { w: 11, down: true, edge: true },
  { w: 17, icon: 'sPlus', edge: true }, { w: 16, icon: 'sLockUi' }, { w: 12, down: true, edge: true },
  { w: 16, icon: 'sIsolate', edge: true }, { w: 17, icon: 'sHw', on: true, edge: true },
  { w: 21, icon: 'sPrint', edge: true }, { w: 17, icon: 'sClean' }, { w: 15, icon: 'sMenu' },
];

const menus = ['Fichier', 'Edition', 'Affichage', 'Insertion', 'Format', 'Outils', 'Dessin', 'Cotation', 'Modification', 'Paramétrique', 'Fenêtre', '?'];
const ribbonTabs = ['Début', 'Insertion', 'Annoter', 'Paramétrique', 'Vue', 'Gérer', 'Sortie', 'Collaborer'];
const sideTabs = ['Archite...', 'CVC', 'Souffla...', 'Electric...', 'Grues', 'Bungal...', 'Signali...', 'Véhicul...', 'Mécani...'];
const imperial = [
  ['door', 'Porte - Anglo-saxon'],
  ['window', 'Fenêtre - Anglo-saxon'],
  ['aluWindow', 'Fenêtre en aluminium\n(élévation) - Anglo-saxon'],
  ['light', 'Appareillage fluorescent\n(encastré) - Anglo-saxon'],
  ['stud', 'Montant - Anglo-saxon'],
  ['toilet', 'Toilettes - Anglo-saxon'],
  ['tree', 'Arbres - Anglo-saxon'],
  ['car', 'Véhicules - Anglo-saxon'],
  ['doorElev', 'Elévation de la porte - Anglo\n-saxon'],
];
const metric = [['door', 'Porte - Métrique'], ['window', 'Fenêtre - Métrique']];

const Tools = ({ items, h }: { items: string[][]; h: number }) => (
  <ToolList $h={h}>
    {items.map(([icon, label]) => (
      <li key={label}>
        <ToolItem $on={icon === 'aluWindow'}><Icon name={icon} /><span>{label}</span></ToolItem>
      </li>
    ))}
  </ToolList>
);

export default function App() {
  return (
    <>
      <GlobalStyle />
      <Shell>
        <TitleBar>
          <QuickTools>
            <Brand aria-label="Menu de l'application">
              <Icon name="appLogo" />
              <BrandTag>LT<Caret /></BrandTag>
            </Brand>
            {['file', 'open', 'save', 'saveAs', 'openMobile', 'saveMobile', 'print'].map(n => (
              <IconButton key={n} aria-label={n}><Icon name={n} /></IconButton>
            ))}
            <IconButton aria-label="Annuler"><Icon name="undo" /></IconButton>
            <Caret />
            <IconButton aria-label="Rétablir"><Icon name="redo" /></IconButton>
            <Caret />
            <IconButton aria-label="Personnaliser"><Icon name="customize" /></IconButton>
            <Share><Icon name="plane" />Partager</Share>
          </QuickTools>
          <WindowTitle>{'Autodesk AutoCAD LT 2022    Dessin7.dwg'}</WindowTitle>
          <Account>
            <Icon name="play" />
            <SearchInput aria-label="Recherche" placeholder="Entrez mot-clé ou expression" />
            <IconButton aria-label="Rechercher"><Icon name="search" /></IconButton>
            <UserButton><Icon name="user" />Caderix</UserButton>
            <Caret />
            <IconButton aria-label="Applications"><Icon name="appStore" /></IconButton>
            <Caret />
            <Rule />
            <HelpDot>?</HelpDot>
            <Caret />
            <WindowButtons $gap={7}>
              <IconButton aria-label="Réduire"><Icon name="minimize" /></IconButton>
              <IconButton aria-label="Restaurer"><Icon name="restore" /></IconButton>
              <IconButton aria-label="Fermer"><Icon name="close" /></IconButton>
            </WindowButtons>
          </Account>
        </TitleBar>

        <MenuBar>
          {menus.map(m => <a key={m} href="#menu">{m}</a>)}
          <WindowButtons $gap={2}>
            <IconButton aria-label="Réduire le dessin"><Icon name="minimize" /></IconButton>
            <IconButton aria-label="Restaurer le dessin"><Icon name="restore" /></IconButton>
            <IconButton aria-label="Fermer le dessin"><Icon name="close" /></IconButton>
          </WindowButtons>
        </MenuBar>

        <RibbonTabs>
          {ribbonTabs.map((t, i) => <RibbonTab key={t} $on={i === 0}>{t}</RibbonTab>)}
          <TabExtra aria-label="Affichage du ruban"><Icon name="videoTab" /><Caret /></TabExtra>
        </RibbonTabs>

        <Ribbon>
          <RibbonPanel w={148} title="Dessin">
            <Big icon="line" label="Ligne" w={26} />
            <Big icon="polyline" label="Polyligne" w={35} />
            <Big icon="circle" label="Cercle" w={36} down />
            <Big icon="arc" label="Arc" w={25} down />
            <Commands w={25} gap={1} items={[{ icon: 'rect', down: true }, { icon: 'ellipse', down: true }, { icon: 'hatch', down: true }]} />
          </RibbonPanel>
          <RibbonPanel w={180} title="Modification">
            <Spacer $w={2} />
            <Commands w={51} gap={2} items={[{ icon: 'move', label: 'Déplacer' }, { icon: 'copy', label: 'Copier' }, { icon: 'stretch', label: 'Etirer' }]} />
            <Commands w={51} gap={2} items={[{ icon: 'rotate', label: 'Rotation' }, { icon: 'mirror', label: 'Miroir' }, { icon: 'scale', label: 'Echelle' }]} />
            <Commands w={57} gap={2} items={[{ icon: 'trim', label: 'Ajuster', down: true }, { icon: 'fillet', label: 'Raccord', down: true }, { icon: 'array', label: 'Réseau', down: true }]} />
            <Commands w={16} items={[{ icon: 'erase' }, { icon: 'explode' }, { icon: 'offset' }]} />
          </RibbonPanel>
          <RibbonPanel w={115} title="Annotation">
            <Spacer $w={4} />
            <Big icon="text" label="Texte" w={27} down />
            <Big icon="dimension" label="Cote" w={29} />
            <Commands w={54} gap={2} items={[{ icon: 'linear', label: 'Linéaire', down: true }, { icon: 'leader', down: true }, { icon: 'table', label: 'Tableau' }]} />
          </RibbonPanel>
          <RibbonPanel w={178} title="Calques">
            <Big icon="layerProps" label={'Propriétés\ndu calque'} w={41} />
            <FieldColumn>
              <Field>
                <Icon name="bulb" /><Icon name="sun" /><Icon name="unlock" /><Icon name="swatch" />
                <Picker aria-label="Calque"><option>0</option></Picker>
                <Caret />
              </Field>
              <IconRow>{['l1', 'l2', 'l3', 'l4', 'l5'].map(n => <IconButton key={n} aria-label={n}><Icon name={n} /></IconButton>)}</IconRow>
              <IconRow>{['l6', 'l7', 'l8', 'l9', 'l10'].map(n => <IconButton key={n} aria-label={n}><Icon name={n} /></IconButton>)}</IconRow>
            </FieldColumn>
          </RibbonPanel>
          <RibbonPanel w={52} title="Bloc">
            <Big icon="insert" label="Insérer" w={27} down />
            <Commands w={24} gap={0} items={[{ icon: 'blockNew' }, { icon: 'blockEdit' }, { icon: 'blockAttr', down: true }]} />
          </RibbonPanel>
          <RibbonPanel w={158} title="Propriétés" launcher>
            <Big icon="matchProps" label={'Copier\nles propriétés'} w={52} />
            <Commands w={15} items={[{ icon: 'colorWheel' }, { icon: 'weights' }, { icon: 'linetypes' }]} />
            <FieldColumn>
              <Field><Icon name="swatch" /><Picker aria-label="Couleur"><option>DuCalque</option></Picker><Caret /></Field>
              <Field><Stroke /><Picker $w={29} aria-label="Epaisseur de ligne"><option>DuCalque</option></Picker><Spacer $w={2} /><Caret /></Field>
              <Field><Stroke /><Picker $w={29} aria-label="Type de ligne"><option>DuCal...</option></Picker><Spacer $w={2} /><Caret /></Field>
            </FieldColumn>
          </RibbonPanel>
          <RibbonPanel w={51} title="Groupes">
            <Spacer $w={1} />
            <Big icon="group" label="Grouper" w={31} />
            <Commands w={18} items={[{ icon: 'ungroup' }, { icon: 'groupEdit' }, { icon: 'groupSel', on: true }]} />
          </RibbonPanel>
          <RibbonPanel w={61} title="Utilitaires">
            <Spacer $w={3} />
            <Big icon="measure" label="Mesurer" w={38} down />
            <Commands w={16} items={[{ icon: 'quickSel' }, { icon: 'selectAll' }, { icon: 'calc' }]} />
          </RibbonPanel>
          <RibbonPanel w={56} title="Presse-papiers" plain>
            <Spacer $w={4} />
            <Big icon="paste" label="Coller" w={33} down />
            <Commands w={16} items={[{ icon: 'cut' }, { icon: 'copyClip' }]} />
          </RibbonPanel>
        </Ribbon>

        <FileTabs>
          <FileTab><button>Début</button></FileTab>
          <FileTab $on>
            <button>Dessin7*</button>
            <IconButton aria-label="Fermer Dessin7"><Icon name="closeThin" /></IconButton>
          </FileTab>
          <AddTab aria-label="Nouveau dessin"><Icon name="plus" /></AddTab>
        </FileTabs>

        <Canvas>
          <CommandLine>
            <CommandGrip>
              <Icon name="grip" />
              <IconButton type="button" aria-label="Fermer"><Icon name="closeSmall" /></IconButton>
              <IconButton type="button" aria-label="Options"><Icon name="wrench" /></IconButton>
            </CommandGrip>
            <CommandField>
              <Icon name="prompt" /><Caret />
              <CommandInput aria-label="Commande" placeholder="Entrez une commande" />
              <Icon name="up" />
            </CommandField>
          </CommandLine>
          <Crosshair>
            <svg width="51" height="51" viewBox="0 0 51 51" fill="none" stroke="#66686c">
              <path d="M0 25.500h20M31 25.500h20M25.500 0v20M25.500 31v20M20.500 20.500h10v10h-10z" />
            </svg>
          </Crosshair>
          <Axes>
            <svg width="50" height="48" viewBox="0 0 50 48" fill="none" stroke="#66686c">
              <path d="M4.500 9.500V38M5 41.500h32M1.500 38.500h6v6h-6zM5.500 0l4 4 4-4M9.500 4v5M39 33.500l8 7M47 33.500l-8 7" />
            </svg>
          </Axes>
          <NavBar>
            <NavHead><IconButton aria-label="Fermer la barre"><Icon name="navClose" /></IconButton></NavHead>
            <IconButton aria-label="Disque de navigation"><Icon name="navWheel" /></IconButton>
            <IconButton aria-label="Panoramique"><Icon name="navHand" /></IconButton>
            <IconButton aria-label="Zoom"><Icon name="navZoom" /></IconButton>
            <NavHead $foot><IconButton aria-label="Options de la barre"><Icon name="navOptions" /></IconButton></NavHead>
          </NavBar>
          <Palette>
            <SideTabs>
              {sideTabs.map((t, i) => <SideTab key={t} $on={i === 0}><span>{t}</span></SideTab>)}
            </SideTabs>
            <PaletteBox>
              <PaletteBody>
                <GroupTitle>Exemples anglo-saxons</GroupTitle>
                <Tools items={imperial} h={240} />
                <GroupTitle>Exemples métriques</GroupTitle>
                <Tools items={metric} h={53} />
              </PaletteBody>
              <ScrollTrack />
              <PaletteEdge>
                <IconButton aria-label="Fermer la palette"><Icon name="closeSmall" /></IconButton>
                <IconButton aria-label="Masquer automatiquement"><Icon name="collapse" /></IconButton>
                <IconButton aria-label="Propriétés de la palette"><Icon name="gearSmall" /></IconButton>
                <PaletteTitle>PALETTES D'OUTILS - TOUTES LES PALETTES</PaletteTitle>
                <Icon name="sheet" />
              </PaletteEdge>
            </PaletteBox>
          </Palette>
        </Canvas>

        <LayoutTabs>
          <LayoutTab $on>Objet</LayoutTab>
          <LayoutTab>Présentation1</LayoutTab>
          <LayoutTab>Présentation2</LayoutTab>
          <AddTab $flip aria-label="Nouvelle présentation"><Icon name="plus" /></AddTab>
        </LayoutTabs>
        <StatusBar>
          {status.map((s, i) => (
            <StatusButton key={i} $w={s.w} $on={s.on} $edge={s.edge} aria-label={s.label ?? s.icon ?? 'Options'}>
              {s.icon && <Icon name={s.icon} />}
              {s.label}
              {s.down && <Caret />}
            </StatusButton>
          ))}
        </StatusBar>
      </Shell>
    </>
  );
}
